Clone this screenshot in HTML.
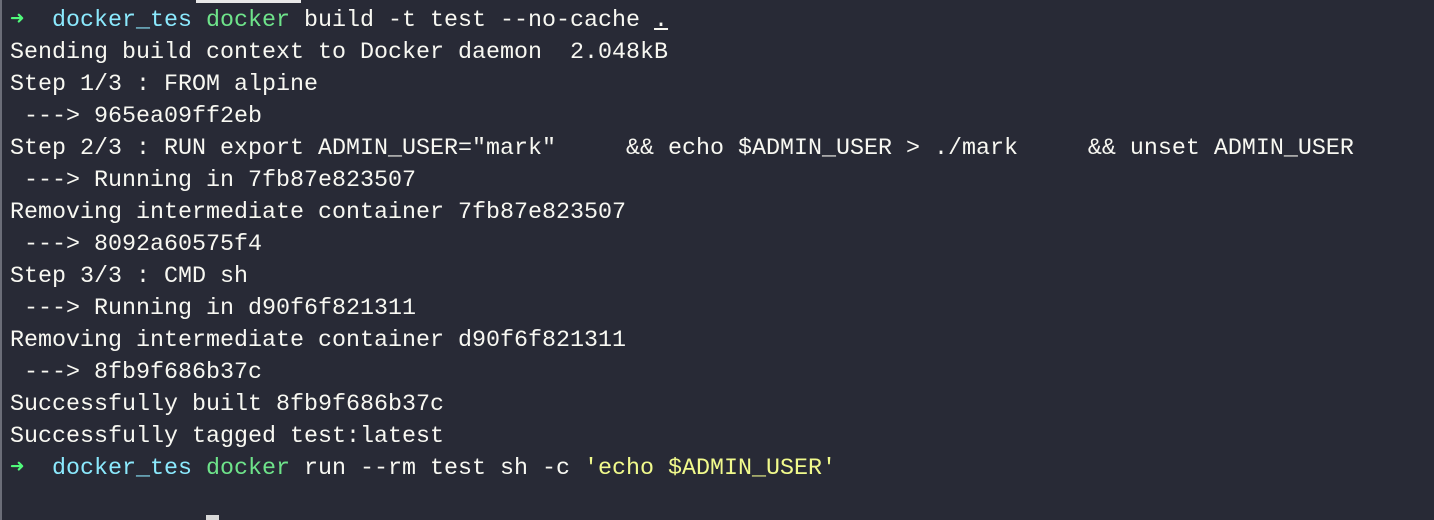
<!DOCTYPE html>
<html><head><meta charset="utf-8"><style>
html,body{margin:0;padding:0;}
body{width:1434px;height:520px;background:#282a36;overflow:hidden;position:relative;font-family:"Liberation Mono",monospace;font-size:23.33px;color:#f8f8f2;}
#l{position:absolute;left:0;top:0;width:2px;height:520px;background:#6b6d78;}
#t{position:absolute;left:196px;top:0;width:105px;height:3px;background:#e8e8e8;z-index:2;}
#c{position:absolute;left:206px;top:515px;width:13px;height:5px;background:#d8d8d8;}
pre{margin:0;position:absolute;left:10px;top:5px;font:inherit;line-height:32px;white-space:pre;}
.g{color:#50fa7b}.d{color:#8be9fd;font-weight:normal}.k{color:#6ee38a}.y{color:#f1fa8c}
u{text-decoration:underline;}
</style></head><body>
<div id="l"></div>
<pre><span class="g">➜</span>  <span class="d">docker_tes</span> <span class="k">docker</span> build -t test --no-cache <u>.</u>
Sending build context to Docker daemon  2.048kB
Step 1/3 : FROM alpine
 ---&gt; 965ea09ff2eb
Step 2/3 : RUN export ADMIN_USER="mark"     &amp;&amp; echo $ADMIN_USER &gt; ./mark     &amp;&amp; unset ADMIN_USER
 ---&gt; Running in 7fb87e823507
Removing intermediate container 7fb87e823507
 ---&gt; 8092a60575f4
Step 3/3 : CMD sh
 ---&gt; Running in d90f6f821311
Removing intermediate container d90f6f821311
 ---&gt; 8fb9f686b37c
Successfully built 8fb9f686b37c
Successfully tagged test:latest
<span class="g">➜</span>  <span class="d">docker_tes</span> <span class="k">docker</span> run --rm test sh -c <span class="y">'echo $ADMIN_USER'</span></pre>
<div id="t"></div><div id="c"></div>
</body></html>
